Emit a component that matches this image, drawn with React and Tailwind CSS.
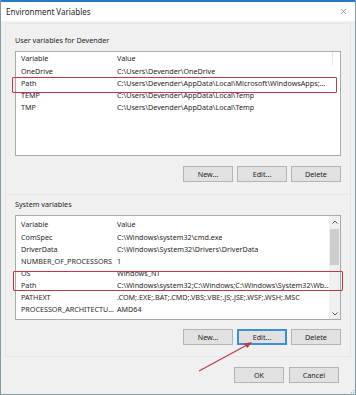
import { X } from 'lucide-react';

const userVars = [
  ['OneDrive', 'C:\\Users\\Devender\\OneDrive'],
  ['Path', 'C:\\Users\\Devender\\AppData\\Local\\Microsoft\\WindowsApps;...'],
  ['TEMP', 'C:\\Users\\Devender\\AppData\\Local\\Temp'],
  ['TMP', 'C:\\Users\\Devender\\AppData\\Local\\Temp'],
];

const sysVars = [
  ['ComSpec', 'C:\\Windows\\system32\\cmd.exe'],
  ['DriverData', 'C:\\Windows\\System32\\Drivers\\DriverData'],
  ['NUMBER_OF_PROCESSORS', '1'],
  ['OS', 'Windows_NT'],
  ['Path', 'C:\\Windows\\system32;C:\\Windows;C:\\Windows\\System32\\Wb...'],
  ['PATHEXT', '.COM;.EXE;.BAT;.CMD;.VBS;.VBE;.JS;.JSE;.WSF;.WSH;.MSC'],
  ['PROCESSOR_ARCHITECTU...', 'AMD64'],
  ['PROCESSOR_IDENTIFIER', 'Intel64 Family 6 Model 58 Stepping 9, GenuineIntel'],
];

function Btn({ children, focused }) {
  return (
    <div
      className={
        'flex h-[16px] w-[50px] items-center justify-center bg-[#e1e1e1] text-[#222] ' +
        (focused ? 'border border-[#3c8fd8] shadow-[inset_0_0_0_1px_#3c8fd8]' : 'border border-[#b4b4b4]')
      }
    >
      {children}
    </div>
  );
}

function Rows({ rows }) {
  return rows.map(([k, v]) => (
    <div key={k} className="flex h-[12px] shrink-0 items-center whitespace-nowrap">
      <div className="w-[101px] shrink-0 overflow-hidden pl-[5px]">{k}</div>
      <div className="overflow-hidden">{v}</div>
    </div>
  ));
}

export default function App() {
  return (
    <div
      className="relative h-[395px] w-[356px] overflow-hidden border-x border-b border-[#7f9ea3] bg-[#f0f0f0] text-[7.2px] text-[#1f1f1f]"
      style={{ fontFamily: '"Noto Sans", "Open Sans", sans-serif' }}
    >
      <div className="h-[2px] bg-[#2a79c4]" />
      <div className="flex h-[19px] items-center justify-between bg-white pl-[5px] pr-[7px] text-[8px]">
        <span>Environment Variables</span>
        <X size={9} strokeWidth={1.2} className="text-[#333]" />
      </div>

      <div className="mx-[4px] mt-[2px] flex h-[172px] flex-col border border-[#e6e6e6] px-[9px] pt-[12px]">
        <div className="leading-[9px]">User variables for Devender</div>
        <div className="mt-[6px] flex h-[105px] flex-col overflow-hidden border border-[#a9a9a9] bg-white">
          <div className="flex h-[13px] shrink-0 items-center">
            <div className="w-[101px] pl-[5px]">Variable</div>
            <div className="w-[215px]">Value</div>
            <div className="h-full border-l border-[#e5e5e5]" />
          </div>
          <Rows rows={userVars} />
        </div>
        <div className="mt-[10px] flex justify-end gap-[4px]">
          <Btn>New...</Btn>
          <Btn>Edit...</Btn>
          <Btn>Delete</Btn>
        </div>
      </div>

      <div className="mx-[4px] flex h-[162px] flex-col border border-t-0 border-[#e6e6e6] px-[9px] pt-[5px]">
        <div className="leading-[9px]">System variables</div>
        <div className="mt-[6px] flex h-[105px] overflow-hidden border border-[#a9a9a9] bg-white">
          <div className="flex flex-1 flex-col overflow-hidden pt-[2px]">
            <div className="flex h-[13px] shrink-0 items-center">
              <div className="w-[101px] pl-[5px]">Variable</div>
              <div>Value</div>
            </div>
            <Rows rows={sysVars} />
          </div>
          <div className="flex w-[11px] shrink-0 flex-col items-center bg-[#f0f0f0]">
            <div className="flex h-[11px] items-center justify-center">
              <svg width="6" height="4" viewBox="0 0 6 4"><path d="M0.5 3.5 L3 1 L5.5 3.5" fill="none" stroke="#555" strokeWidth="1" /></svg>
            </div>
            <div className="mt-[2px] h-[36px] w-[9px] bg-[#cdcdcd]" />
            <div className="flex-1" />
            <div className="flex h-[11px] items-center justify-center">
              <svg width="6" height="4" viewBox="0 0 6 4"><path d="M0.5 0.5 L3 3 L5.5 0.5" fill="none" stroke="#555" strokeWidth="1" /></svg>
            </div>
          </div>
        </div>
        <div className="mt-[9px] flex justify-end gap-[4px]">
          <Btn>New...</Btn>
          <Btn focused>Edit...</Btn>
          <Btn>Delete</Btn>
        </div>
      </div>

      <div className="mt-[10px] flex justify-end gap-[5px] pr-[16px]">
        <Btn>OK</Btn>
        <Btn>Cancel</Btn>
      </div>

      <div className="absolute left-[11px] top-[77px] h-[16px] w-[325px] rounded-[1px] border-[1.5px] border-[#c4364a]" />
      <div className="absolute left-[12px] top-[271px] h-[20px] w-[330px] rounded-[1px] border-[1.5px] border-[#c4364a]" />

      <svg className="absolute left-0 top-0" width="356" height="395" viewBox="0 0 356 395">
        <line x1="198" y1="371" x2="246" y2="345" stroke="#c4364a" strokeWidth="1.2" />
        <path d="M251 342 L243 343.5 L246.5 348 Z" fill="#c4364a" />
      </svg>

      <div className="absolute bottom-[1px] right-[1px] grid grid-cols-3 gap-[1px]">
        <span />
        <span />
        <span className="h-[1px] w-[1px] bg-[#aaa]" />
        <span />
        <span className="h-[1px] w-[1px] bg-[#aaa]" />
        <span className="h-[1px] w-[1px] bg-[#aaa]" />
      </div>
    </div>
  );
}
